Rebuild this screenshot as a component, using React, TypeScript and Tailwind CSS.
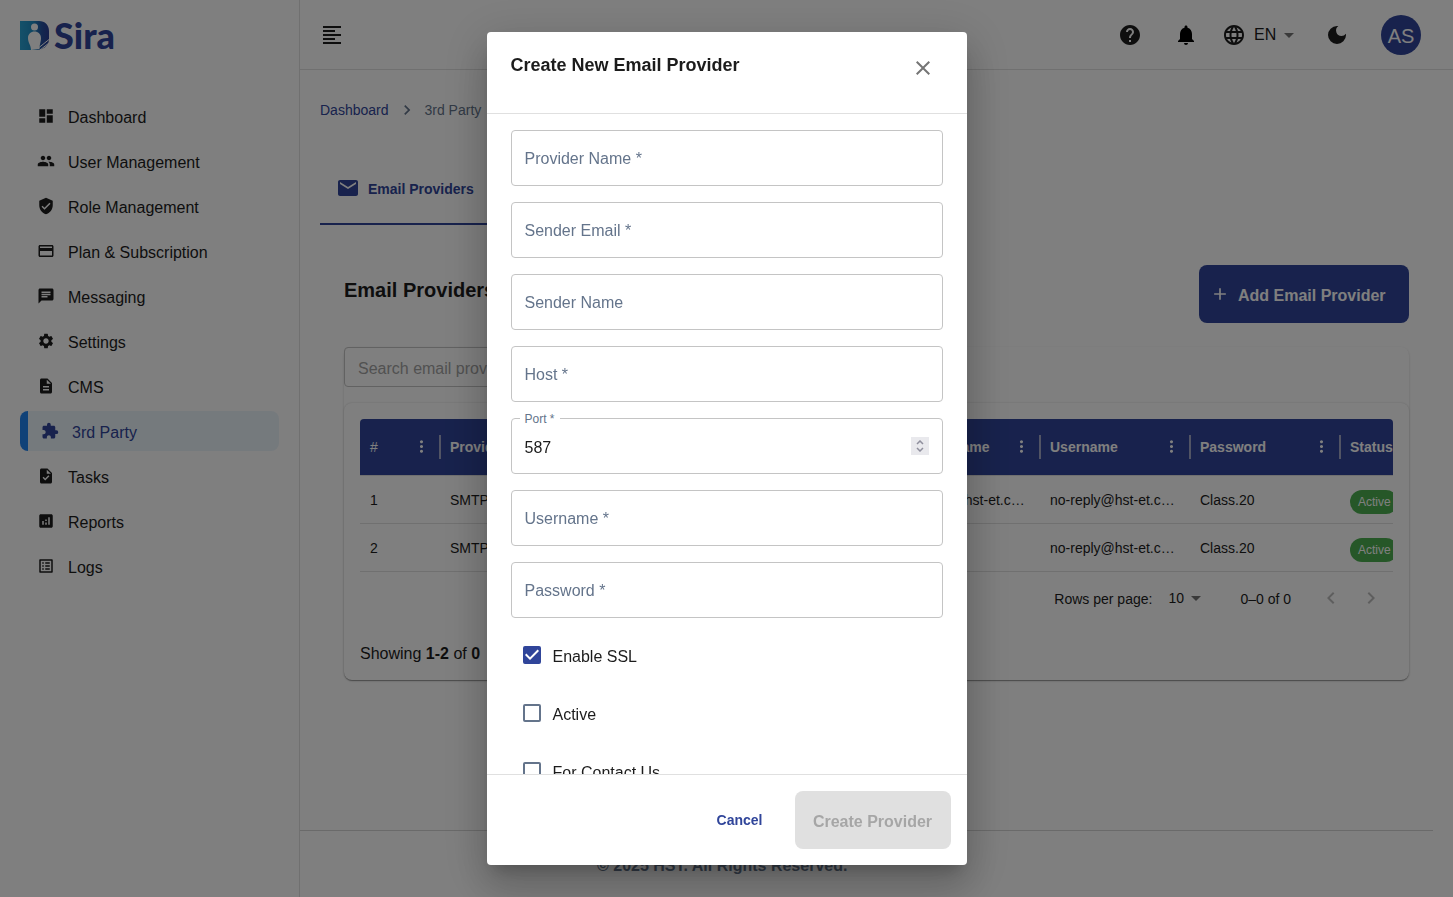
import { useState } from 'react';
import clsx from 'clsx';
import type { IconType } from 'react-icons';
import {
  MdAdd,
  MdAnalytics,
  MdArrowDropDown,
  MdChat,
  MdClose,
  MdCreditCard,
  MdDarkMode,
  MdDashboard,
  MdDescription,
  MdEmail,
  MdExtension,
  MdFormatAlignLeft,
  MdGroup,
  MdHelp,
  MdLanguage,
  MdMoreVert,
  MdNavigateBefore,
  MdNavigateNext,
  MdNotifications,
  MdOutlineListAlt,
  MdSettings,
  MdTask,
  MdVerifiedUser,
} from 'react-icons/md';

const NAV: { label: string; icon: IconType; active?: boolean }[] = [
  { label: 'Dashboard', icon: MdDashboard },
  { label: 'User Management', icon: MdGroup },
  { label: 'Role Management', icon: MdVerifiedUser },
  { label: 'Plan & Subscription', icon: MdCreditCard },
  { label: 'Messaging', icon: MdChat },
  { label: 'Settings', icon: MdSettings },
  { label: 'CMS', icon: MdDescription },
  { label: '3rd Party', icon: MdExtension, active: true },
  { label: 'Tasks', icon: MdTask },
  { label: 'Reports', icon: MdAnalytics },
  { label: 'Logs', icon: MdOutlineListAlt },
];

const COLUMNS = ['#', 'Provider Name', 'Sender Email', 'Host', 'Sender Name', 'Username', 'Password', 'Status'];

const ROWS = [
  ['1', 'SMTP', 'no-reply@hst-et.com', 'hst-et.com', 'no-reply@hst-et.com', 'no-reply@hst-et.com', 'Class.20'],
  ['2', 'SMTP', 'no-reply@hst-et.com', 'hst-et.com', '', 'no-reply@hst-et.com', 'Class.20'],
];

function Logo() {
  return (
    <svg width="110" height="44" viewBox="0 0 110 44" role="img" aria-label="Sira">
      <defs>
        <linearGradient id="mark" x1="0" y1="0" x2="1" y2="0">
          <stop offset="0" stopColor="#2aa3d4" />
          <stop offset="0.45" stopColor="#1f8dc4" />
          <stop offset="0.75" stopColor="#26509f" />
          <stop offset="1" stopColor="#2a3f96" />
        </linearGradient>
      </defs>
      <path d="M0 1h19c6 0 10 4 10 10v8c0 3-1 5-2 6-3 4-7 5-11 5H0z" fill="url(#mark)" />
      <circle cx="14.500" cy="7" r="3.500" fill="#fff" />
      <path d="M11 30c0-5-3-7-3-12 0-4 3-6.500 6.500-6.500S21 14 21 18c0 4-1.500 6-1.500 11z" fill="#fff" />
      <path d="M19 27.500l10-8M20 30l9-7M24 31l6-5" stroke="#fff" strokeWidth="1" />
      <text x="34" y="29" fontFamily="Lato, sans-serif" fontSize="36" fontWeight="900" fill="#30459a">
        Sira
      </text>
    </svg>
  );
}

function Sidebar() {
  return (
    <aside className="flex w-[300px] shrink-0 flex-col border-r border-[#e0e0e0] px-5 pt-5">
      <a href="#home" className="mb-8 h-11">
        <Logo />
      </a>
      <nav className="flex flex-col gap-[5px]">
        {NAV.map(({ label, icon: Icon, active }) => (
          <a
            key={label}
            href={`#${label}`}
            className={clsx(
              'flex h-10 items-center gap-[13px]',
              active
                ? 'rounded-lg border-l-8 border-[#2084f0] bg-[#ebf4fb] pl-[13px] text-[#30459a]'
                : 'pl-[17px]',
            )}
          >
            <Icon size={18} />
            <span className="pt-1">{label}</span>
          </a>
        ))}
      </nav>
    </aside>
  );
}

function TopBar() {
  return (
    <header className="flex h-[70px] shrink-0 items-center border-b border-[#e0e0e0] pl-5 pr-8">
      <button type="button" aria-label="Toggle menu">
        <MdFormatAlignLeft size={24} />
      </button>
      <div className="ml-auto flex items-center">
        <button type="button" aria-label="Help" className="mr-8">
          <MdHelp size={24} />
        </button>
        <button type="button" aria-label="Notifications" className="mr-6 text-black">
          <MdNotifications size={24} />
        </button>
        <MdLanguage size={24} />
        <div className="relative mr-6">
          <select aria-label="Language" className="w-[55px] appearance-none bg-transparent pl-2">
            <option>EN</option>
          </select>
          <MdArrowDropDown size={24} className="pointer-events-none absolute right-0 top-0 text-[#757575]" />
        </div>
        <button type="button" aria-label="Dark mode" className="mr-8">
          <MdDarkMode size={24} />
        </button>
        <button type="button" className="h-10 w-10 rounded-full bg-[#30459a] pt-0.5 text-xl text-white">
          AS
        </button>
      </div>
    </header>
  );
}

function ProviderTable() {
  return (
    <div className="overflow-hidden rounded-t">
      <table className="w-[1130px] table-fixed border-collapse text-left text-sm">
        <colgroup>
          <col className="w-20" />
          {COLUMNS.slice(1).map((c) => (
            <col key={c} className="w-[150px]" />
          ))}
        </colgroup>
        <thead>
          <tr className="h-14 border-b border-[#e0e0e0] bg-[#30459a] text-white">
            {COLUMNS.map((c, i) => (
              <th key={c} className={clsx('p-0', i === 0 ? 'font-normal' : 'font-bold')}>
                <div className="-mr-px flex h-6 items-center justify-between border-r-2 border-[#a3a9c9] pl-2.5">
                  {c}
                  <button type="button" aria-label={`${c} column menu`} className="mr-2">
                    <MdMoreVert size={19} />
                  </button>
                </div>
              </th>
            ))}
          </tr>
        </thead>
        <tbody>
          {ROWS.map((row) => (
            <tr key={row[0]} className="h-12 border-b border-[#e0e0e0]">
              {row.map((cell, i) => (
                <td key={i} className="truncate px-2.5 pt-0.5">
                  {cell}
                </td>
              ))}
              <td className="px-2.5 pt-1.5">
                <span className="flex h-6 w-12 items-center rounded-full bg-[#4caf50] px-2 text-xs text-white">
                  Active
                </span>
              </td>
            </tr>
          ))}
        </tbody>
      </table>
    </div>
  );
}

function Pagination() {
  return (
    <div className="flex h-[52px] items-center justify-end pr-0.5 text-sm">
      <label htmlFor="rows-per-page" className="pt-0.5">
        Rows per page:
      </label>
      <div className="relative ml-4 mr-8">
        <select id="rows-per-page" className="w-10 appearance-none bg-transparent">
          <option>10</option>
        </select>
        <MdArrowDropDown size={24} className="pointer-events-none absolute -top-0.5 right-0 text-[#757575]" />
      </div>
      <span className="mr-5 pt-0.5">0–0 of 0</span>
      <button type="button" disabled aria-label="Previous page" className="p-2 text-[#bdbdbd]">
        <MdNavigateBefore size={24} />
      </button>
      <button type="button" disabled aria-label="Next page" className="p-2 text-[#bdbdbd]">
        <MdNavigateNext size={24} />
      </button>
    </div>
  );
}

function ProvidersPage() {
  return (
    <main className="px-5 pt-7">
      <nav aria-label="Breadcrumb" className="flex h-6 items-center text-sm">
        <a href="#dashboard" className="text-[#30459a]">
          Dashboard
        </a>
        <MdNavigateNext size={20} className="mx-2 text-[#64748b]" />
        <span className="text-[#64748b]">3rd Party</span>
      </nav>
      <div role="tablist" className="mt-[31px] flex">
        <button
          type="button"
          role="tab"
          aria-selected
          className="flex h-[72px] items-center gap-2 border-b-2 border-[#30459a] px-4 text-sm font-bold text-[#30459a]"
        >
          <MdEmail size={24} />
          <span className="pt-0.5">Email Providers</span>
        </button>
      </div>

      <section className="px-6 pt-10">
        <div className="mb-6 flex items-start justify-between">
          <h1 className="pt-[11px] text-xl font-bold">Email Providers</h1>
          <button
            type="button"
            className="flex h-[58px] w-[210px] items-center gap-2 rounded-lg bg-[#30459a] pl-[11px] font-bold text-white"
          >
            <MdAdd size={20} />
            <span className="pt-1">Add Email Provider</span>
          </button>
        </div>

        <div className="rounded-lg bg-white shadow-[0_2px_1px_-1px_rgba(0,0,0,0.2),0_1px_1px_rgba(0,0,0,0.14),0_1px_3px_rgba(0,0,0,0.12)]">
          <input
            type="search"
            aria-label="Search email providers"
            placeholder="Search email providers..."
            className="mb-4 block h-10 w-80 rounded border border-[#c4c4c4] px-[13px] pt-1 placeholder:text-[#a3a3a3]"
          />
          <div className="rounded-lg px-4 pb-3.5 pt-4 shadow-[0_0_2px_rgba(0,0,0,0.2)]">
            <ProviderTable />
            <Pagination />
            <p className="pt-[18px]">
              Showing <b>1-2</b> of <b>0</b>
            </p>
          </div>
        </div>
      </section>
    </main>
  );
}

const inputClass = 'h-14 w-full rounded border border-[#c4c4c4] px-[13px] outline-none';

function TextField({ id, label, type = 'text' }: { id: string; label: string; type?: string }) {
  return (
    <div className="relative">
      <input id={id} type={type} className={inputClass} />
      <label htmlFor={id} className="pointer-events-none absolute left-3.5 top-[17px] text-[#64748b]">
        {label}
      </label>
    </div>
  );
}

function PortField() {
  const [port, setPort] = useState(587);

  return (
    <div className="relative">
      <input
        id="port"
        type="number"
        value={port}
        onChange={(e) => setPort(Number(e.target.value))}
        className={`${inputClass} pt-1 [appearance:textfield] [&::-webkit-inner-spin-button]:appearance-none`}
      />
      <label htmlFor="port" className="absolute -top-[7px] left-[9px] bg-white px-[5px] text-xs text-[#64748b]">
        Port *
      </label>
      <div className="absolute right-3.5 top-[19px] flex h-[18px] w-[18px] flex-col items-center justify-between bg-[#e9e9ed] py-[3px] text-[#8f8f9d]">
        <button type="button" aria-label="Increase port" onClick={() => setPort(port + 1)}>
          <svg width="8" height="5" viewBox="0 0 8 5" fill="none" stroke="currentColor" strokeWidth="1.500" className="block">
            <path d="M1 4l3-3 3 3" />
          </svg>
        </button>
        <button type="button" aria-label="Decrease port" onClick={() => setPort(port - 1)}>
          <svg width="8" height="5" viewBox="0 0 8 5" fill="none" stroke="currentColor" strokeWidth="1.500" className="block">
            <path d="M1 1l3 3 3-3" />
          </svg>
        </button>
      </div>
    </div>
  );
}

function Checkbox({ label, defaultChecked }: { label: string; defaultChecked?: boolean }) {
  return (
    <label className="flex h-[42px] shrink-0 items-center gap-3 pl-3">
      <span className="relative h-[18px] w-[18px]">
        <input
          type="checkbox"
          defaultChecked={defaultChecked}
          className="peer block h-[18px] w-[18px] appearance-none rounded-xs border-2 border-[#64748b] checked:border-[#30459a] checked:bg-[#30459a]"
        />
        <svg
          viewBox="3 3 18 18"
          className="pointer-events-none absolute inset-0 hidden fill-white peer-checked:block"
        >
          <path d="M10 17l-5-5 1.410-1.410L10 14.170l7.590-7.590L19 8z" />
        </svg>
      </span>
      <span className="pt-1">{label}</span>
    </label>
  );
}

function CreateProviderDialog() {
  return (
    <div className="fixed inset-0 flex justify-center bg-black/50 py-8">
      <div
        role="dialog"
        aria-modal
        aria-labelledby="dialog-title"
        className="flex w-[480px] flex-col rounded bg-white shadow-[0_11px_15px_-7px_rgba(0,0,0,0.2),0_24px_38px_3px_rgba(0,0,0,0.14),0_9px_46px_8px_rgba(0,0,0,0.12)]"
      >
        <div className="flex h-[82px] shrink-0 items-start justify-between border-b border-[#e0e0e0] px-6">
          <h2 id="dialog-title" className="pt-[19px] text-lg font-bold">
            Create New Email Provider
          </h2>
          <button type="button" aria-label="Close" className="mr-2 mt-6 text-[#757575]">
            <MdClose size={24} />
          </button>
        </div>
        <form className="flex min-h-0 flex-1 flex-col">
          <div className="flex min-h-0 flex-1 flex-col gap-4 overflow-hidden px-6 pt-4">
            <TextField id="provider-name" label="Provider Name *" />
            <TextField id="sender-email" label="Sender Email *" type="email" />
            <TextField id="sender-name" label="Sender Name" />
            <TextField id="host" label="Host *" />
            <PortField />
            <TextField id="username" label="Username *" />
            <TextField id="password" label="Password *" type="password" />
            <Checkbox label="Enable SSL" defaultChecked />
            <Checkbox label="Active" />
            <Checkbox label="For Contact Us" />
          </div>
          <div className="flex shrink-0 items-center justify-end gap-6 border-t border-[#e0e0e0] p-4">
            <button type="button" className="px-2 text-sm font-bold text-[#30459a]">
              Cancel
            </button>
            <button
              type="submit"
              disabled
              className="h-[58px] w-[156px] rounded-lg bg-[#e0e0e0] pt-1 font-bold text-[#a6a6a6]"
            >
              Create Provider
            </button>
          </div>
        </form>
      </div>
    </div>
  );
}

export default function App() {
  return (
    <div className="flex min-h-screen bg-white font-['Liberation_Sans',Arial,sans-serif] text-base text-[#1c1c1c]">
      <Sidebar />
      <div className="flex min-w-0 flex-1 flex-col">
        <TopBar />
        <ProvidersPage />
        <footer className="mr-5 mt-auto h-[67px] border-t border-[#d5d5d5] pl-[297px] pt-[23px] font-bold text-[#64748b]">
          © 2025 HST. All Rights Reserved.
        </footer>
      </div>
      <CreateProviderDialog />
    </div>
  );
}
